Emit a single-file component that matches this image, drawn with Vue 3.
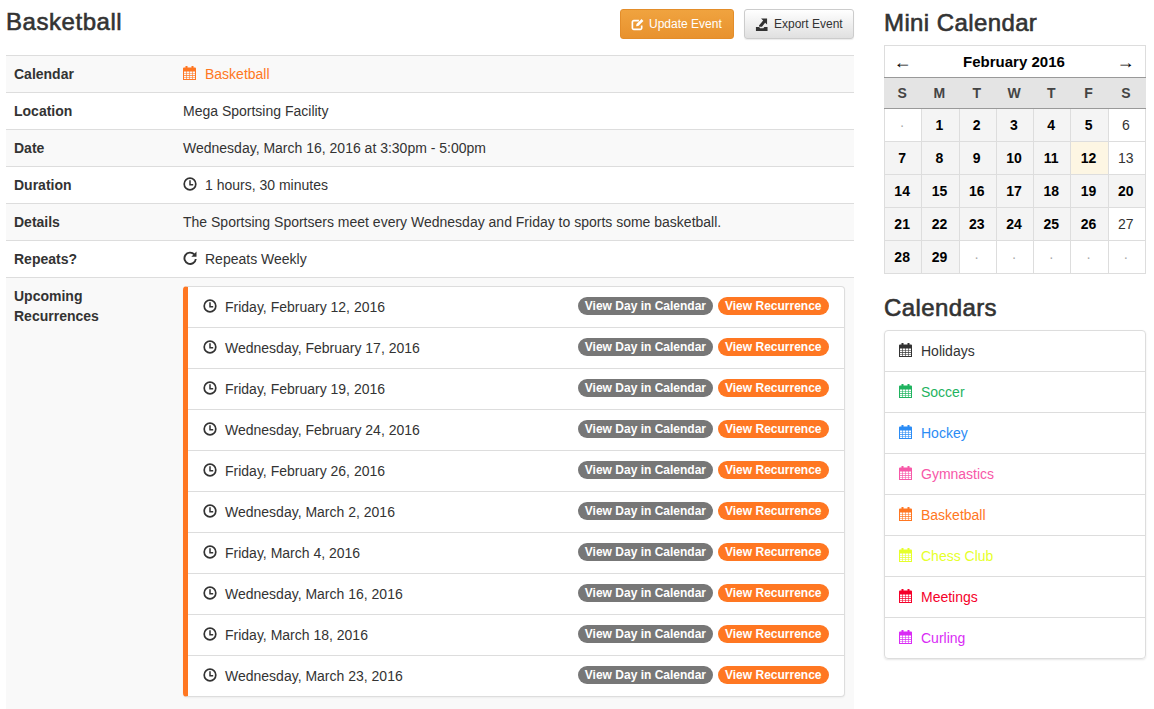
<template>
  <div class="page">
    <main class="main-col">
      <header class="event-head">
        <h2 class="title">Basketball</h2>
        <div class="actions">
          <button class="btn btn-update">
            <svg class="btn-icon" viewBox="0 0 14 14" fill="none" stroke="currentColor" stroke-width="1.8">
              <path d="M11.500 8v2.800a1.500 1.500 0 0 1-1.500 1.500H3a1.500 1.500 0 0 1-1.500-1.500V4.300A1.500 1.500 0 0 1 3 2.800h5.500" />
              <path d="M5.500 8.800l.4-2.300 5.500-5.300 2 2-5.500 5.300z" fill="currentColor" stroke="none" />
            </svg>
            Update Event
          </button>
          <button class="btn btn-export">
            <svg class="btn-icon" viewBox="0 0 14 14" fill="#333">
              <path d="M1 9.800h3.500l1 1.200h3.500l1-1.200H13.500V14H1z" />
              <path d="M6.500.5h6.500v6.500l-2.100-2-3.400 4.500H4.600l-.3-1.300L8.800 2.700z" />
            </svg>
            Export Event
          </button>
        </div>
      </header>

      <div class="details">
        <div class="row">
          <div class="label">Calendar</div>
          <div class="value cal-link">
            <svg class="cal-icon" viewBox="0 0 13 14" fill="currentColor">
              <path d="M2.500 0h2v2.500h-2zM8.500 0h2v2.500h-2z" />
              <path fill-rule="evenodd" d="M0 2.500A1 1 0 0 1 1 1.500h11a1 1 0 0 1 1 1V14H0zM1 5.500v1.500h2.400V5.500zM4 5.500v1.500h2.200V5.500zM6.800 5.500v1.500H9V5.500zM9.600 5.500v1.500H12V5.500zM1 7.600v1.700h2.400V7.600zM4 7.600v1.700h2.200V7.600zM6.800 7.600v1.700H9V7.600zM9.600 7.600v1.700H12V7.600zM1 9.900v1.500h2.400V9.900zM4 9.900v1.500h2.200V9.900zM6.800 9.900v1.500H9V9.900zM9.600 9.900v1.500H12V9.900zM1 12v1h2.400v-1zM4 12v1h2.200v-1zM6.800 12v1H9v-1zM9.600 12v1H12v-1z" />
            </svg>
            Basketball
          </div>
        </div>
        <div class="row">
          <div class="label">Location</div>
          <div class="value">Mega Sportsing Facility</div>
        </div>
        <div class="row">
          <div class="label">Date</div>
          <div class="value">Wednesday, March 16, 2016 at 3:30pm - 5:00pm</div>
        </div>
        <div class="row">
          <div class="label">Duration</div>
          <div class="value">
            <svg class="val-icon" viewBox="0 0 14 14" fill="none" stroke="currentColor" stroke-width="1.700">
              <circle cx="7" cy="7" r="5.800" />
              <path d="M7 3.200V7.800H10.200" stroke-width="1.500" />
            </svg>
            1 hours, 30 minutes
          </div>
        </div>
        <div class="row">
          <div class="label">Details</div>
          <div class="value">The Sportsing Sportsers meet every Wednesday and Friday to sports some basketball.</div>
        </div>
        <div class="row">
          <div class="label">Repeats?</div>
          <div class="value">
            <svg class="val-icon" viewBox="0 0 14 14" fill="none" stroke="currentColor" stroke-width="1.900">
              <path d="M11.300 3.400A5.700 5.700 0 1 0 12.800 8" />
              <path d="M13.500.6v5.200H8.300z" fill="currentColor" stroke="none" />
            </svg>
            Repeats Weekly
          </div>
        </div>
        <div class="row row-upcoming">
          <div class="label">Upcoming Recurrences</div>
          <div class="value">
            <ul class="recur-list">
              <li v-for="d in recurrences" :key="d" class="recur-item">
                <span class="recur-date">
                  <svg class="val-icon" viewBox="0 0 14 14" fill="none" stroke="currentColor" stroke-width="1.700">
                    <circle cx="7" cy="7" r="5.800" />
                    <path d="M7 3.200V7.800H10.200" stroke-width="1.500" />
                  </svg>
                  {{ d }}
                </span>
                <span class="badge badge-grey">View Day in Calendar</span>
                <span class="badge badge-orange">View Recurrence</span>
              </li>
            </ul>
          </div>
        </div>
      </div>
    </main>

    <aside class="side-col">
      <h3 class="side-title">Mini Calendar</h3>
      <table class="mini-cal">
        <thead>
          <tr class="month-row">
            <th class="arrow">←</th>
            <th colspan="5" class="month">February 2016</th>
            <th class="arrow">→</th>
          </tr>
          <tr class="dow-row">
            <th v-for="(w, i) in weekdays" :key="i">{{ w }}</th>
          </tr>
        </thead>
        <tbody>
          <tr v-for="(week, i) in weeks" :key="i">
            <td v-for="(c, j) in week" :key="j" :class="c.kind">{{ c.text }}</td>
          </tr>
        </tbody>
      </table>

      <h3 class="side-title side-title-2">Calendars</h3>
      <ul class="cal-list">
        <li v-for="c in calendars" :key="c.name" class="cal-item" :style="{ color: c.color }">
          <svg class="cal-icon" viewBox="0 0 13 14" fill="currentColor">
            <path d="M2.500 0h2v2.500h-2zM8.500 0h2v2.500h-2z" />
            <path fill-rule="evenodd" d="M0 2.500A1 1 0 0 1 1 1.500h11a1 1 0 0 1 1 1V14H0zM1 5.500v1.500h2.400V5.500zM4 5.500v1.500h2.200V5.500zM6.800 5.500v1.500H9V5.500zM9.600 5.500v1.500H12V5.500zM1 7.600v1.700h2.400V7.600zM4 7.600v1.700h2.200V7.600zM6.800 7.600v1.700H9V7.600zM9.600 7.600v1.700H12V7.600zM1 9.900v1.500h2.400V9.900zM4 9.900v1.500h2.200V9.900zM6.800 9.900v1.500H9V9.900zM9.600 9.900v1.500H12V9.900zM1 12v1h2.400v-1zM4 12v1h2.200v-1zM6.800 12v1H9v-1zM9.600 12v1H12v-1z" />
          </svg>
          {{ c.name }}
        </li>
      </ul>
    </aside>
  </div>
</template>

<script setup>
const recurrences = [
  "Friday, February 12, 2016",
  "Wednesday, February 17, 2016",
  "Friday, February 19, 2016",
  "Wednesday, February 24, 2016",
  "Friday, February 26, 2016",
  "Wednesday, March 2, 2016",
  "Friday, March 4, 2016",
  "Wednesday, March 16, 2016",
  "Friday, March 18, 2016",
  "Wednesday, March 23, 2016",
];

const weekdays = ["S", "M", "T", "W", "T", "F", "S"];

// days with no events stay plain, everything else gets the bold grey cell
const plainDays = [6, 13, 27];

function cell(day) {
  if (!day) return { text: "·", kind: "empty" };
  if (day === 12) return { text: day, kind: "event today" };
  if (plainDays.includes(day)) return { text: day, kind: "plain" };
  return { text: day, kind: "event" };
}

const weeks = [
  [0, 1, 2, 3, 4, 5, 6],
  [7, 8, 9, 10, 11, 12, 13],
  [14, 15, 16, 17, 18, 19, 20],
  [21, 22, 23, 24, 25, 26, 27],
  [28, 29, 0, 0, 0, 0, 0],
].map((w) => w.map(cell));

const calendars = [
  { name: "Holidays", color: "#333333" },
  { name: "Soccer", color: "#1fb35f" },
  { name: "Hockey", color: "#2b8cf5" },
  { name: "Gymnastics", color: "#f758a8" },
  { name: "Basketball", color: "#ff7722" },
  { name: "Chess Club", color: "#e6ff2a" },
  { name: "Meetings", color: "#f5002a" },
  { name: "Curling", color: "#d92cf5" },
];
</script>

<style>
html, body {
  margin: 0;
  background: #fff;
}
</style>

<style scoped>
.page {
  display: flex;
  width: 1154px;
  height: 709px;
  overflow: hidden;
  padding: 0 8px 0 6px;
  box-sizing: border-box;
  gap: 30px;
  font-family: "Liberation Sans", Arial, sans-serif;
  font-size: 14px;
  line-height: 20px;
  color: #333;
}

.main-col {
  width: 848px;
  flex: none;
}

.side-col {
  width: 262px;
  flex: none;
}

/* --- Event header --- */
.event-head {
  display: flex;
  justify-content: space-between;
  align-items: flex-start;
  height: 55px;
}

.title,
.side-title {
  font-size: 24px;
  line-height: 28px;
  font-weight: 400;
  letter-spacing: 0.4px;
  -webkit-text-stroke: 0.6px #333;
}

.title {
  margin: 8px 0 0;
  letter-spacing: 0.55px;
}

.actions {
  display: flex;
  gap: 10px;
  padding-top: 9px;
}

.btn {
  display: flex;
  align-items: center;
  height: 30px;
  box-sizing: border-box;
  padding: 0 10px;
  border-radius: 3px;
  font-family: inherit;
  font-size: 12px;
  line-height: 18px;
  white-space: nowrap;
}

.btn-icon {
  width: 13px;
  height: 13px;
  margin-right: 6px;
  flex: none;
}

.btn-update {
  width: 114px;
  color: #fff;
  border: 1px solid #e38d2a;
  background: linear-gradient(#f0a33f, #e8922e);
}

.btn-update .btn-icon {
  margin-right: 5px;
}

.btn-export {
  width: 110px;
  color: #333;
  border: 1px solid #ccc;
  background: linear-gradient(#fff, #e0e0e0);
  box-shadow: 0 1px 1px rgba(0, 0, 0, 0.08);
}

/* --- Details table --- */
.details {
  height: 654px;
}

.row {
  display: flex;
  height: 37px;
  box-sizing: border-box;
  border-top: 1px solid #ddd;
  padding: 8px;
}

.row:nth-child(odd) {
  background: #f9f9f9;
}

.label {
  width: 169px;
  flex: none;
  font-weight: 700;
  padding-right: 40px;
  box-sizing: border-box;
}

.value {
  flex: 1;
  display: flex;
  align-items: center;
  height: 20px;
}

.row-upcoming {
  height: 432px;
}

.row-upcoming .value {
  height: auto;
  align-items: flex-start;
}

.cal-link {
  color: #ff7722;
}

.val-icon {
  width: 14px;
  height: 14px;
  margin-right: 8px;
  flex: none;
  position: relative;
  top: -1px;
}

.cal-icon {
  width: 13px;
  height: 14px;
  margin-right: 9px;
  flex: none;
  position: relative;
  top: -1px;
}

/* --- Recurrence list --- */
.recur-list {
  list-style: none;
  margin: 0;
  padding: 0;
  width: 662px;
  border: 1px solid #ddd;
  border-left: 5px solid #ff7722;
  border-radius: 4px;
  background: #fff;
  box-sizing: border-box;
  box-shadow: 0 1px 2px rgba(0, 0, 0, 0.05);
}

.recur-item {
  display: flex;
  align-items: center;
  height: 41px;
  box-sizing: border-box;
  padding: 0 15px;
  border-top: 1px solid #ddd;
}

.recur-item:first-child {
  height: 40px;
  border-top: none;
}

.recur-date {
  flex: 1;
  display: flex;
  align-items: center;
}

.badge {
  height: 18px;
  line-height: 19px;
  border-radius: 10px;
  font-size: 12px;
  font-weight: 700;
  color: #fff;
  position: relative;
  top: -1px;
}

.badge-grey {
  background: #777;
  padding: 0 6.5px;
  margin-right: 5px;
}

.badge-orange {
  background: #ff7722;
  padding: 0 7.5px;
}

/* --- Sidebar --- */
.side-title {
  margin: 9px 0 0;
  height: 36px;
}

.side-title-2 {
  margin-top: 20px;
  height: 36px;
}

.mini-cal {
  width: 262px;
  border-collapse: collapse;
  table-layout: fixed;
  color: #000;
}

.mini-cal th,
.mini-cal td {
  border: 1px solid #ddd;
  padding: 0 2px 0 0;
  text-align: center;
}

.month-row th {
  height: 31px;
  border-bottom-color: #999;
  border-right: none;
  border-left: none;
  font-size: 15px;
}

.month-row th:first-child {
  border-left: 1px solid #ddd;
}

.month-row th:last-child {
  border-right: 1px solid #ddd;
}

.arrow {
  font-size: 18px !important;
  font-weight: 400;
}

.dow-row th {
  height: 30px;
  background: #e4e4e4;
  color: #444;
  border-color: #e4e4e4;
  border-bottom-color: #999;
  border-top-color: #999;
}

.mini-cal td {
  height: 32px;
  font-size: 14px;
}

.event {
  background: #f4f4f4;
  font-weight: 700;
}

.today {
  background: #fdf6e3;
}

.plain {
  color: #333;
}

.empty {
  color: #aaa;
}

.cal-list {
  list-style: none;
  margin: 0;
  padding: 0;
  border: 1px solid #ddd;
  border-radius: 4px;
  box-shadow: 0 1px 2px rgba(0, 0, 0, 0.1);
}

.cal-item {
  display: flex;
  align-items: center;
  height: 41px;
  box-sizing: border-box;
  padding-left: 14px;
  border-top: 1px solid #ddd;
}

.cal-item:first-child {
  height: 40px;
  border-top: none;
}
</style>
